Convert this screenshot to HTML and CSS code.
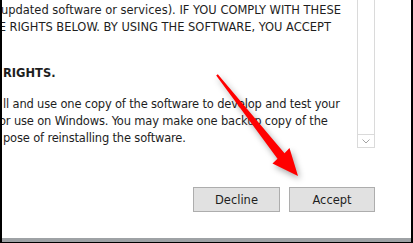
FILE: index.html
```html
<!DOCTYPE html>
<html lang="en">
<head>
<meta charset="utf-8">
<title>License terms</title>
<link rel="stylesheet" href="styles.css">
</head>
<body>
<div class="window">
  <div class="main">
    <div class="text">
      <div class="para">
        <div class="line l1">updated software or services). IF YOU COMPLY WITH THESE</div>
        <div class="line l2">THE RIGHTS BELOW. BY USING THE SOFTWARE, YOU ACCEPT</div>
      </div>
      <div class="heading">
        <div class="line l3">RIGHTS.</div>
      </div>
      <div class="para2">
        <div class="line l5">ll and use one copy of the software to develop and test your</div>
        <div class="line l6">or use on Windows. You may make one backup copy of the</div>
        <div class="line l7">pose of reinstalling the software.</div>
      </div>
    </div>
    <div class="scroll">
      <div class="track"></div>
      <div class="arrow-down">
        <svg width="8" height="5" viewBox="0 0 8 5"><polyline points="0.5,0.5 4,4 7.5,0.5" fill="none" stroke="#a3a3a3" stroke-width="1"/></svg>
      </div>
    </div>
  </div>
  <div class="actions">
    <button class="btn btn-decline">Decline</button>
    <button class="btn btn-accept">Accept</button>
  </div>
  <div class="footer"></div>
</div>
<svg class="pointer" width="413" height="243" viewBox="0 0 413 243">
  <polygon points="217.8,74.2 284.5,153.2 289.5,148 298,176 272.5,163.5 277.5,158.8 216.2,75.6" fill="#ff0000"/>
</svg>
</body>
</html>
```
FILE: styles.css
```css
html, body {
  margin: 0;
  padding: 0;
  background: #fff;
}
body {
  position: relative;
  width: 413px;
  height: 243px;
  overflow: hidden;
  font-family: "DejaVu Sans Condensed", "DejaVu Sans", sans-serif;
  font-stretch: condensed;
  font-size: 12.75px;
  color: #1e1e1e;
}
.window {
  box-sizing: border-box;
  width: 413px;
  height: 243px;
  border-left: 2px solid #000;
  border-right: 2px solid #000;
  display: flex;
  flex-direction: column;
}
.main {
  display: flex;
  height: 148px;
  padding-right: 36px;
}
.text {
  flex: 1;
  overflow: hidden;
  padding-top: 0.5px;
}
.line {
  white-space: nowrap;
  line-height: 17px;
}
.heading {
  margin-top: 29px;
  font-weight: bold;
}
.para2 {
  margin-top: 14px;
  letter-spacing: -0.16px;
}
.l1 { text-indent: -1px; }
.l2 { text-indent: -19px; }
.l3 { text-indent: 1px; }
.l5 { text-indent: 1px; }
.l6 { text-indent: -3px; }
.l7 { text-indent: 1px; }
.scroll {
  width: 16px;
  border-left: 1px solid #dadada;
  border-right: 1px solid #dadada;
  border-bottom: 1px solid #dadada;
  display: flex;
  flex-direction: column;
}
.track {
  flex: 1;
}
.arrow-down {
  height: 12px;
  border-top: 1px solid #dadada;
  display: flex;
  align-items: center;
  justify-content: center;
}
.arrow-down svg {
  display: block;
}
.actions {
  display: flex;
  justify-content: flex-end;
  gap: 9px;
  margin-top: 39px;
  padding-right: 36px;
}
.btn {
  box-sizing: border-box;
  height: 25px;
  margin: 0;
  padding: 0;
  background: #e1e1e1;
  border: 1px solid #adadad;
  font-family: inherit;
  font-stretch: condensed;
  font-size: 12.75px;
  color: #1e1e1e;
}
.btn-decline { width: 87px; }
.btn-accept { width: 86px; }
.footer {
  margin-top: auto;
  height: 4px;
  background: #9ea2a5;
  border-bottom: 1px solid #000;
}
.pointer {
  position: absolute;
  left: 0;
  top: 0;
  pointer-events: none;
  filter: drop-shadow(2px 3px 3px rgba(0, 0, 0, 0.35));
}
```
